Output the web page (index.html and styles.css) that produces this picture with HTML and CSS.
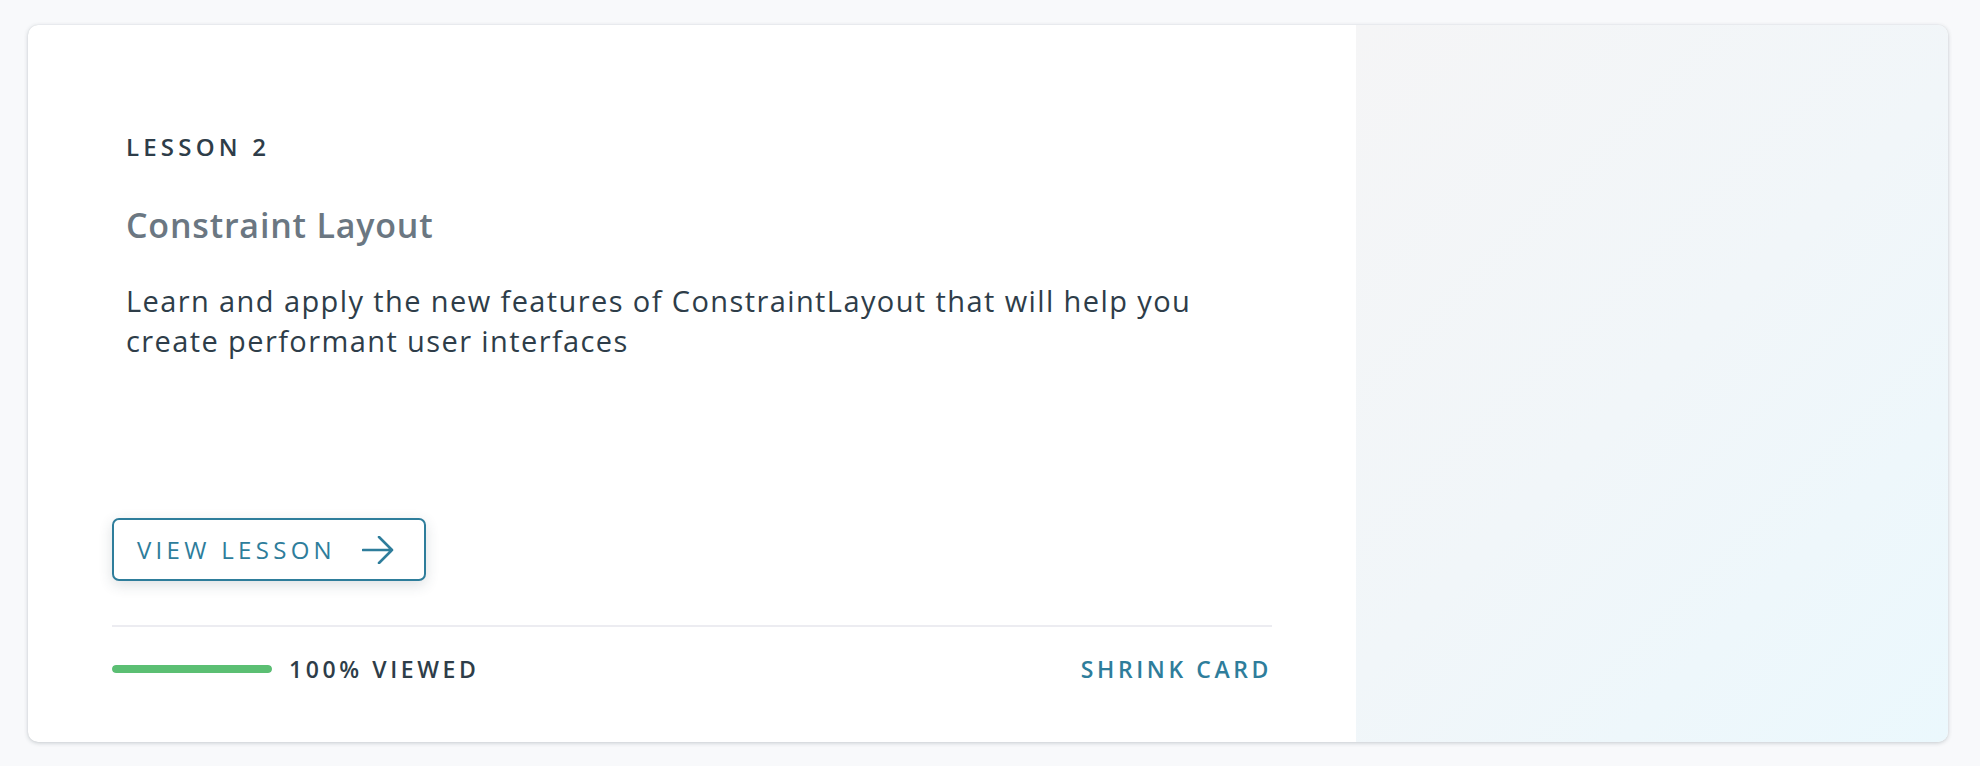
FILE: index.html
```html
<!DOCTYPE html>
<html lang="en">
<head>
<meta charset="utf-8">
<title>Lesson 2 – Constraint Layout</title>
<link rel="stylesheet" href="styles.css">
</head>
<body>
  <article class="card">
    <section class="card-main">
      <div class="card-intro">
        <p class="eyebrow">Lesson 2</p>
        <h2 class="card-title">Constraint Layout</h2>
        <p class="card-desc">Learn and apply the new features of ConstraintLayout that will help you create performant user interfaces</p>
      </div>
      <div class="card-bottom">
        <button class="btn-view" type="button">
          <span>View Lesson</span>
          <svg class="btn-arrow" width="32" height="28" viewBox="0 0 32 28" aria-hidden="true">
            <path d="M1 14H30M17 1L30 14L17 27" fill="none" stroke="currentColor" stroke-width="2.6" stroke-linecap="round" stroke-linejoin="round"/>
          </svg>
        </button>
        <div class="divider"></div>
        <div class="card-footer">
          <div class="progress">
            <div class="progress-track"><div class="progress-fill" style="width:100%"></div></div>
            <span class="progress-label">100% Viewed</span>
          </div>
          <a class="shrink" href="#">Shrink Card</a>
        </div>
      </div>
    </section>
    <aside class="card-media"></aside>
  </article>
</body>
</html>
```

FILE: styles.css
```css
* { box-sizing: border-box; }

html, body { margin: 0; padding: 0; }

body {
  background: #f8f9fb;
  font-family: "Open Sans", "Noto Sans", "Liberation Sans", sans-serif;
  color: #2e3d49;
  padding: 25px 32px 24px 28px;
}

.card {
  display: flex;
  width: 1920px;
  height: 717px;
  background: #ffffff;
  border-radius: 10px;
  box-shadow: 0 1px 4px rgba(46, 61, 73, 0.24), 0 0 1px rgba(46, 61, 73, 0.15);
  overflow: hidden;
}

.card-main {
  flex: 1;
  display: flex;
  flex-direction: column;
  padding: 106px 84px 57px 84px;
}

.card-intro {
  padding-left: 14px;
}

.eyebrow {
  margin: 0;
  font-size: 24px;
  line-height: 32px;
  font-weight: 600;
  letter-spacing: 4.2px;
  text-transform: uppercase;
  color: #2e3d49;
}

.card-title {
  margin: 40px 0 0 0;
  font-size: 34px;
  line-height: 44px;
  font-weight: 600;
  letter-spacing: 0.8px;
  color: #6b7782;
}

.card-desc {
  margin: 34px 0 0 0;
  font-size: 29px;
  line-height: 40px;
  font-weight: 400;
  letter-spacing: 1.4px;
  color: #2e3d49;
}

.card-bottom {
  margin-top: auto;
}

.btn-view {
  display: inline-flex;
  align-items: center;
  gap: 26px;
  height: 63px;
  padding: 0 30px 0 23px;
  background: #ffffff;
  border: 2px solid #2e7d9b;
  border-radius: 7px;
  color: #2e7d9b;
  font-family: inherit;
  font-size: 24px;
  font-weight: 400;
  letter-spacing: 4.3px;
  text-transform: uppercase;
  box-shadow: 0 4px 14px rgba(46, 61, 73, 0.16);
  cursor: pointer;
}

.btn-arrow {
  display: block;
  flex: none;
}

.divider {
  margin-top: 44px;
  height: 2px;
  background: #ececf1;
}

.card-footer {
  display: flex;
  align-items: center;
  justify-content: space-between;
  padding-top: 26px;
  height: 58px;
}

.progress {
  display: flex;
  align-items: center;
  gap: 17px;
}

.progress-track {
  width: 160px;
  height: 8px;
  border-radius: 4px;
  background: #e2e6ea;
  overflow: hidden;
}

.progress-fill {
  height: 100%;
  background: #5bbf73;
  border-radius: 4px;
}

.progress-label {
  font-size: 23px;
  line-height: 32px;
  font-weight: 600;
  letter-spacing: 3.6px;
  text-transform: uppercase;
  color: #2e3d49;
}

.shrink {
  font-size: 23px;
  line-height: 32px;
  font-weight: 600;
  letter-spacing: 3.6px;
  text-transform: uppercase;
  color: #2e7d9b;
  text-decoration: none;
}

.card-media {
  width: 592px;
  flex: none;
  background: linear-gradient(135deg, #f5f5f6 0%, #f1f6f9 50%, #ebf8fd 100%);
}
```
